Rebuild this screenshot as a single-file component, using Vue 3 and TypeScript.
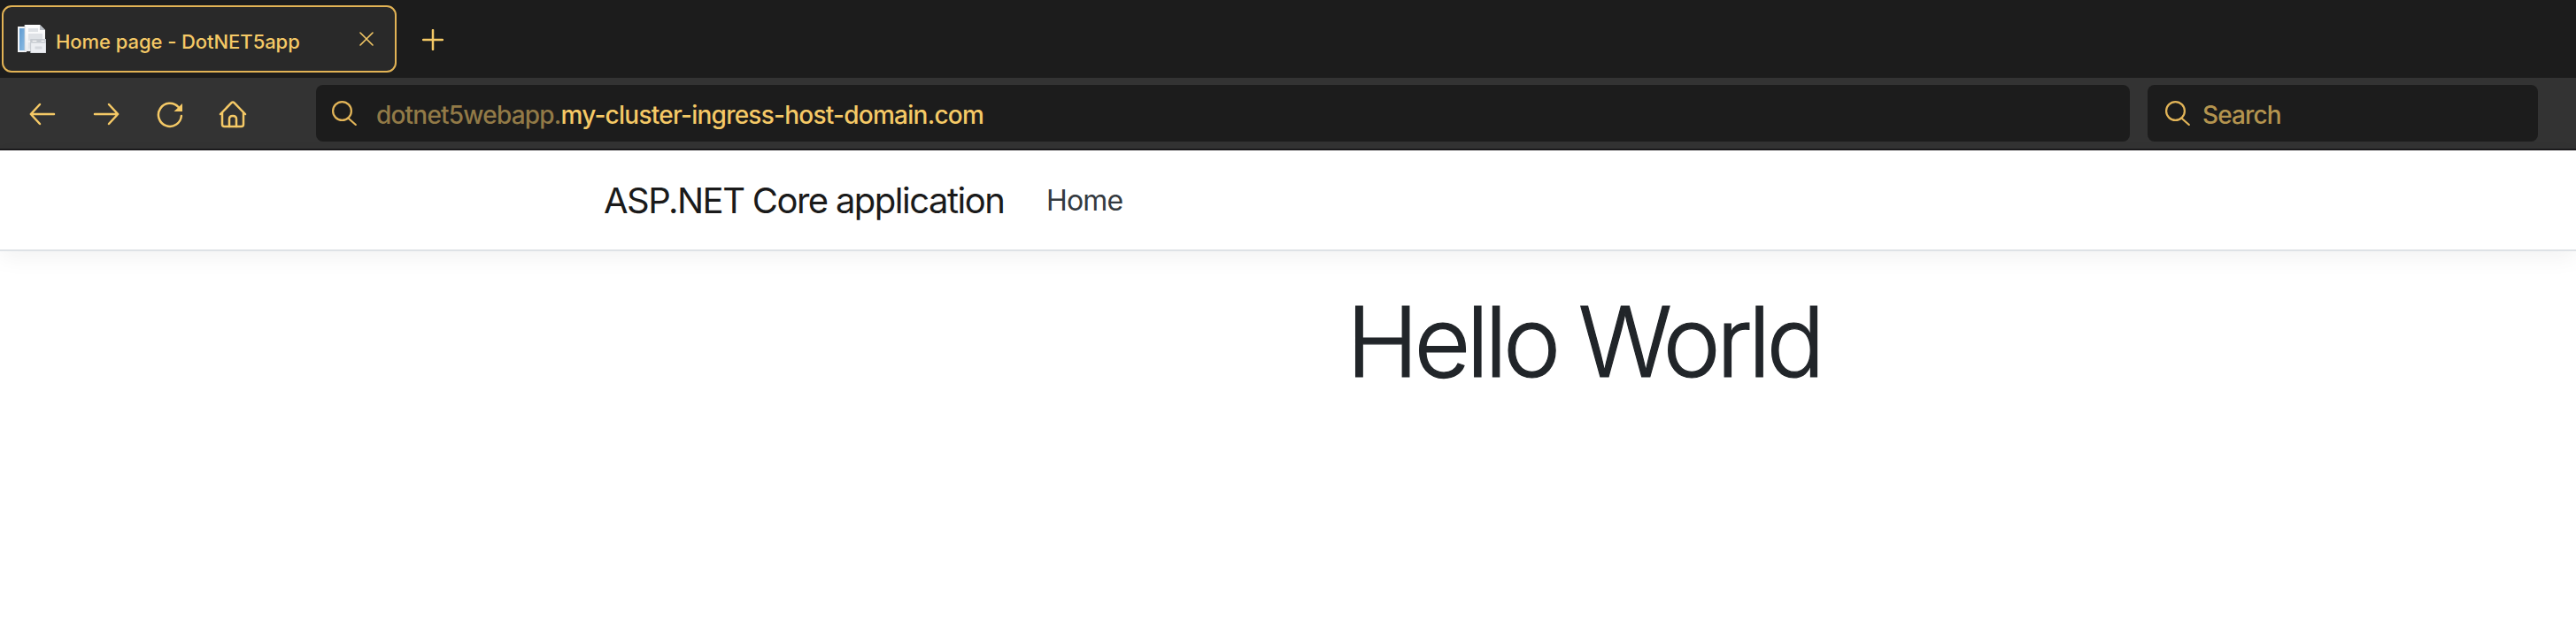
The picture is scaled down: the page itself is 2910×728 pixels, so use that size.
<script setup lang="ts">
const pageTitle: string = 'Home page - DotNET5app'
const subdomain: string = 'dotnet5webapp.'
const domain: string = 'my-cluster-ingress-host-domain.com'
</script>

<template>
  <div class="window">
    <div class="tabs">
      <div class="tab">
        <svg class="favicon" viewBox="0 0 32 32" width="32" height="32">
          <defs>
            <linearGradient id="blue" x1="0" y1="0" x2="1" y2="1">
              <stop offset="0" stop-color="#5f9bd0" />
              <stop offset="1" stop-color="#8bbbe3" />
            </linearGradient>
            <linearGradient id="paper" x1="0" y1="0" x2="0" y2="1">
              <stop offset="0" stop-color="#ffffff" />
              <stop offset="1" stop-color="#e9ebee" />
            </linearGradient>
          </defs>
          <path d="M0 2h10v29H0z" fill="#f3f5f7" />
          <path d="M2 4h6v25H2z" fill="url(#blue)" />
          <path d="M8 0h17l6 6v24H8z" fill="url(#paper)" />
          <path d="M8 0v30" stroke="#ccd2d8" stroke-width=".8" />
          <path d="M12 4h11v4H12zM12 10h16v8H12zM12 20h4v7h-4z" fill="#dfe2e6" />
          <path d="M25 0l6 6h-6z" fill="#b9bec5" />
          <path d="M15 16.5h17V32H15z" fill="#eceef2" stroke="#bfc3c9" stroke-width=".8" />
          <path d="M15 16.5h17v4H15z" fill="#c6cad0" />
          <path d="M17 18.4h4M27 18.4h3" stroke="#fff" stroke-width="1" />
          <path d="M19.500 24.500h8v3h-8z" fill="#d5d8de" />
        </svg>
        <span class="tab-title">{{ pageTitle }}</span>
        <svg class="close" viewBox="0 0 16 16" width="16" height="16">
          <path d="M1 1l14 14M15 1L1 15" />
        </svg>
      </div>
      <svg class="plus" viewBox="0 0 24 24" width="24" height="24">
        <path d="M12 1v22M1 12h22" />
      </svg>
    </div>

    <div class="toolbar">
      <svg class="nav" viewBox="0 0 32 32" width="32" height="32">
        <path d="M29 16H3M13 5L2.800 16L13 27" />
      </svg>
      <svg class="nav" viewBox="0 0 32 32" width="32" height="32">
        <path d="M3 16h26M19 5l10.200 11L19 27" />
      </svg>
      <svg class="nav" viewBox="0 0 32 32" width="32" height="32">
        <path d="M28.900 18A13 13 0 1 1 25.500 8" />
        <path class="solid" d="M30 4v9h-9.500z" />
      </svg>
      <svg class="nav" viewBox="0 0 32 32" width="32" height="32">
        <path d="M2 16L14.500 3.200Q16 1.600 17.500 3.200L30 16" />
        <path d="M4 14.500V27.500Q4 30 6.500 30H25.500Q28 30 28 27.500V14.500" />
        <path d="M12 30V21.500Q12 18 16 18T20 21.500V30" />
      </svg>
      <div class="field address">
        <svg class="lens" viewBox="0 0 28 28" width="28" height="28">
          <circle cx="11.500" cy="11.500" r="10.400" />
          <path d="M18.300 19.500L26.800 27" />
        </svg>
        <span class="url"><span class="sub">{{ subdomain }}</span>{{ domain }}</span>
      </div>
      <div class="field search">
        <svg class="lens" viewBox="0 0 28 28" width="28" height="28">
          <circle cx="11.500" cy="11.500" r="10.400" />
          <path d="M18.300 19.500L26.800 27" />
        </svg>
        <span class="hint">Search</span>
      </div>
    </div>

    <header class="site-header">
      <span class="brand">ASP.NET Core application</span>
      <span class="link">Home</span>
    </header>
    <main>
      <h1>Hello World</h1>
    </main>
  </div>
</template>

<style>
body {
  background: #fff;
}
</style>

<style scoped>
.window {
  width: 2910px;
  height: 728px;
  overflow: hidden;
  background: #fff;
  font-family: Inter, "Liberation Sans", sans-serif;
  white-space: nowrap;
}
svg {
  flex: none;
  fill: none;
  stroke-linecap: round;
  stroke-linejoin: round;
}
.tabs {
  display: flex;
  height: 88px;
  box-sizing: border-box;
  padding: 6px 2px;
  background: #1c1c1c;
}
.tab {
  display: flex;
  align-items: center;
  width: 446px;
  height: 76px;
  box-sizing: border-box;
  padding: 0 24px 0 16px;
  border: 2px solid #e2b355;
  border-radius: 11px;
  background: #292929;
}
.tab-title {
  flex: 1;
  margin: 5px 0 0 11px;
  color: #f5c966;
  font-size: 22px;
  font-weight: 500;
  letter-spacing: -0.06px;
  line-height: 32px;
}
.close {
  stroke: #f5c966;
  stroke-width: 1.6;
}
.plus {
  margin: 27px 0 0 29px;
  stroke: #f5c966;
  stroke-width: 2.5;
}
.toolbar {
  display: flex;
  align-items: center;
  height: 82px;
  box-sizing: border-box;
  padding: 0 43px 0 32px;
  border-bottom: 2px solid #1c1b1d;
  background: #333;
}
.nav {
  margin: 2px 40px 0 0;
  stroke: #f5c966;
  stroke-width: 2.5;
}
.nav:nth-child(4) {
  margin-right: 78px;
  margin-left: -1px;
}
.solid {
  fill: #f5c966;
  stroke: none;
}
.field {
  display: flex;
  align-items: center;
  height: 64px;
  box-sizing: border-box;
  border-radius: 8px;
  background: #1c1c1c;
  font-size: 28px;
  line-height: 40px;
}
.address {
  flex: 1;
  padding-left: 18px;
}
.search {
  width: 441px;
  margin-left: 20px;
  padding-left: 20px;
}
.lens {
  stroke: #e3b558;
  stroke-width: 2.2;
}
.url {
  margin: 3px 0 0 22px;
  color: #f5c966;
  font-weight: 500;
  letter-spacing: -0.75px;
}
.sub {
  color: #927a47;
  font-weight: 450;
  letter-spacing: -0.8px;
}
.hint {
  margin: 3px 0 0 14px;
  color: #b4944f;
  font-weight: 450;
  letter-spacing: -0.9px;
}
.site-header {
  display: flex;
  align-items: center;
  height: 114px;
  box-sizing: border-box;
  padding-left: 682px;
  border-bottom: 2px solid #dee2e6;
  box-shadow: 0 8px 24px rgba(0, 0, 0, 0.05);
}
.brand {
  width: 500px;
  margin-top: 2px;
  color: #1a1a1a;
  font-size: 40px;
  letter-spacing: -1.5px;
  word-spacing: -0.5px;
  line-height: 60px;
}
.link {
  margin-top: 2px;
  color: #343a40;
  font-size: 32px;
  letter-spacing: -0.8px;
  line-height: 48px;
}
main {
  padding: 35px 0 0 674px;
}
h1 {
  width: 2236px;
  margin: 0;
  box-sizing: border-box;
  padding-left: 847px;
  color: #212529;
  font-size: 110px;
  font-weight: 300;
  letter-spacing: -4.9px;
  word-spacing: -1.500px;
  line-height: 134px;
  -webkit-text-stroke: 1.2px #212529;
}
</style>
